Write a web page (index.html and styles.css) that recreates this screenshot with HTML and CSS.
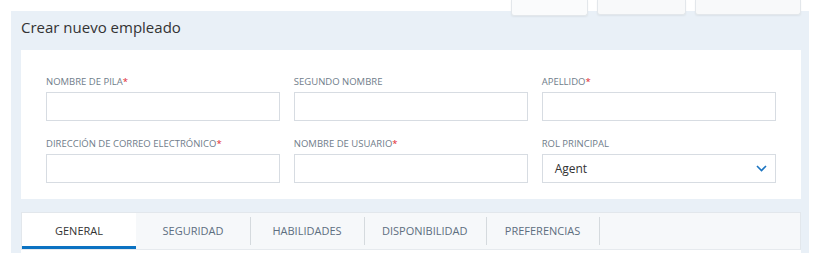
FILE: index.html
```html
<!DOCTYPE html>
<html lang="es">
<head>
<meta charset="utf-8">
<title>Crear nuevo empleado</title>
<link rel="stylesheet" href="styles.css">
</head>
<body>
<div class="toolbar">
  <div class="tbtn tbtn-a"></div>
  <div class="tbtn tbtn-b"></div>
  <div class="tbtn tbtn-c"></div>
</div>
<div class="panel">
  <h1 class="title">Crear nuevo empleado</h1>
  <div class="card">
    <div class="grid">
      <div class="field">
        <label class="lbl">Nombre de pila<span class="req">*</span></label>
        <div class="input"></div>
      </div>
      <div class="field">
        <label class="lbl">Segundo nombre</label>
        <div class="input"></div>
      </div>
      <div class="field">
        <label class="lbl">Apellido<span class="req">*</span></label>
        <div class="input"></div>
      </div>
      <div class="field">
        <label class="lbl">Dirección de correo electrónico<span class="req">*</span></label>
        <div class="input"></div>
      </div>
      <div class="field">
        <label class="lbl">Nombre de usuario<span class="req">*</span></label>
        <div class="input"></div>
      </div>
      <div class="field">
        <label class="lbl">Rol principal</label>
        <div class="input select">
          <span class="select-val">Agent</span>
          <svg class="chev" width="11" height="7" viewBox="0 0 11 7"><path d="M1 1 L5.5 5.5 L10 1" fill="none" stroke="#1b74c1" stroke-width="1.6"/></svg>
        </div>
      </div>
    </div>
  </div>
  <div class="tabs">
    <div class="tab active">General</div>
    <div class="tab">Seguridad</div>
    <div class="tab sep">Habilidades</div>
    <div class="tab sep">Disponibilidad</div>
    <div class="tab sep last">Preferencias</div>
  </div>
  <div class="tab-body"></div>
</div>
</body>
</html>
```
FILE: styles.css
```css
* { box-sizing: border-box; }
html, body { margin: 0; padding: 0; background: #fff; }
body {
  font-family: "Open Sans", "Liberation Sans", sans-serif;
  color: #333;
  position: relative;
  padding: 11px 6px 0 11px;
  height: 265px;
  overflow: hidden;
}
.toolbar {
  position: absolute;
  top: 0;
  right: 14px;
  display: flex;
  gap: 9px;
  z-index: 2;
}
.tbtn {
  height: 15px;
  background: #f8f9fa;
  border: 1px solid #e3e7eb;
  border-top: none;
  border-radius: 0 0 3px 3px;
  box-shadow: 0 1px 2px rgba(0,0,0,0.06);
}
.tbtn-a { width: 77px; height: 16px; background: #fafbfc; }
.tbtn-b { width: 89px; }
.tbtn-c { width: 106px; }
.panel {
  background: #e9f0f7;
  height: 242px;
  padding: 0 8px 0 10px;
  display: flex;
  flex-direction: column;
  overflow: hidden;
}
.title {
  margin: 0;
  padding-top: 5px;
  height: 39px;
  font-size: 15px;
  line-height: 22px;
  font-weight: 400;
  color: #333;
}
.card {
  background: #fff;
  padding: 25px 25px 16px 25px;
}
.grid {
  display: grid;
  grid-template-columns: 1fr 1fr 1fr;
  column-gap: 13.5px;
  row-gap: 16px;
}
.field { display: flex; flex-direction: column; }
.lbl {
  font-size: 9.5px;
  line-height: 14px;
  text-transform: uppercase;
  color: #707d8a;
  margin-bottom: 3px;
  white-space: nowrap;
}
.req { color: #e0262e; }
.input {
  height: 29px;
  border: 1px solid #d7dce2;
  background: #fff;
}
.select {
  display: flex;
  align-items: center;
  justify-content: space-between;
  padding: 0 8px 0 12px;
}
.select-val { font-size: 12px; color: #333; }
.chev { display: block; }
.tabs {
  margin-top: 13px;
  height: 38px;
  display: flex;
  background: #f6f8fa;
  border: 1px solid #e2e7ec;
  border-bottom-color: #e6eaee;
}
.tab {
  min-width: 114px;
  padding: 0 18px;
  text-align: center;
  font-size: 11px;
  line-height: 36px;
  text-transform: uppercase;
  color: #5d6e80;
  position: relative;
}
.tab.active {
  background: #fff;
  color: #333;
  box-shadow: inset 0 -3px 0 #0b72c2;
}
.tab.sep::before, .tab.last::after {
  content: "";
  position: absolute;
  top: 4px;
  bottom: 4px;
  width: 1px;
  background: #d5dade;
}
.tab.sep::before { left: 0; }
.tab.last::after { right: 0; }
.tab-body {
  flex: 1;
  background: #fff;
}
```
